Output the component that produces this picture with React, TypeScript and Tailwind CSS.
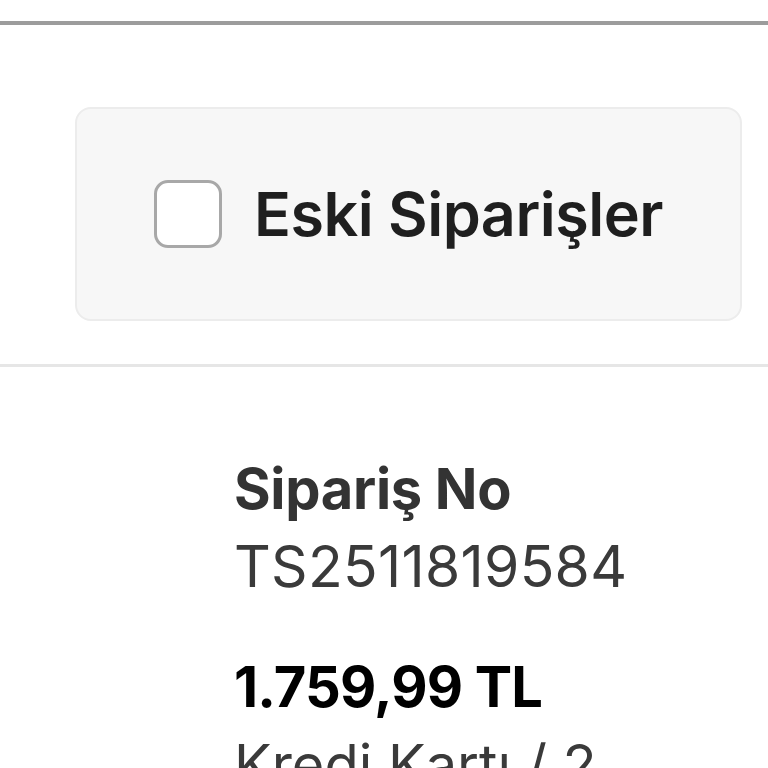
import { useState } from 'react';

export default function App() {
  const [checked, setChecked] = useState(false);

  return (
    <div
      className="w-[768px] h-[768px] overflow-hidden bg-white text-[#222]"
      style={{ fontFamily: 'Inter, "Noto Sans", sans-serif' }}
    >
      <div className="h-[21px]" />
      <div className="h-[4px] bg-[#9c9c9c]" />

      <div className="pt-[82px] pb-[43px] pl-[75px] pr-[26px]">
        <div className="h-[214px] rounded-[16px] border-2 border-[#ececec] bg-[#f7f7f7] flex items-center justify-center">
          <label className="flex items-center gap-[32px] cursor-pointer">
            <button
              onClick={() => setChecked(!checked)}
              className="w-[68px] h-[68px] rounded-[14px] border-[3px] border-[#a8a8a8] bg-white"
            />
            <span className="text-[61px] font-semibold tracking-[-0.5px] leading-none text-[#1f1f1f]">Eski Siparişler</span>
          </label>
        </div>
      </div>

      <div className="h-[3px] bg-[#e6e6e6]" />

      <div className="pl-[234px] pt-[83px]">
        <div className="text-[56px] font-bold leading-[78px] text-[#333] tracking-[-0.3px]">Sipariş No</div>
        <div className="text-[57px] leading-[78px] text-[#3a3a3a] tracking-[0.3px]">TS2511819584</div>
        <div className="mt-[42px] text-[56px] font-bold leading-[78px] text-black tracking-[-0.8px]">1.759,99 TL</div>
        <div className="text-[56px] leading-[78px] text-[#3a3a3a]">Kredi Kartı / 2</div>
      </div>
    </div>
  );
}
